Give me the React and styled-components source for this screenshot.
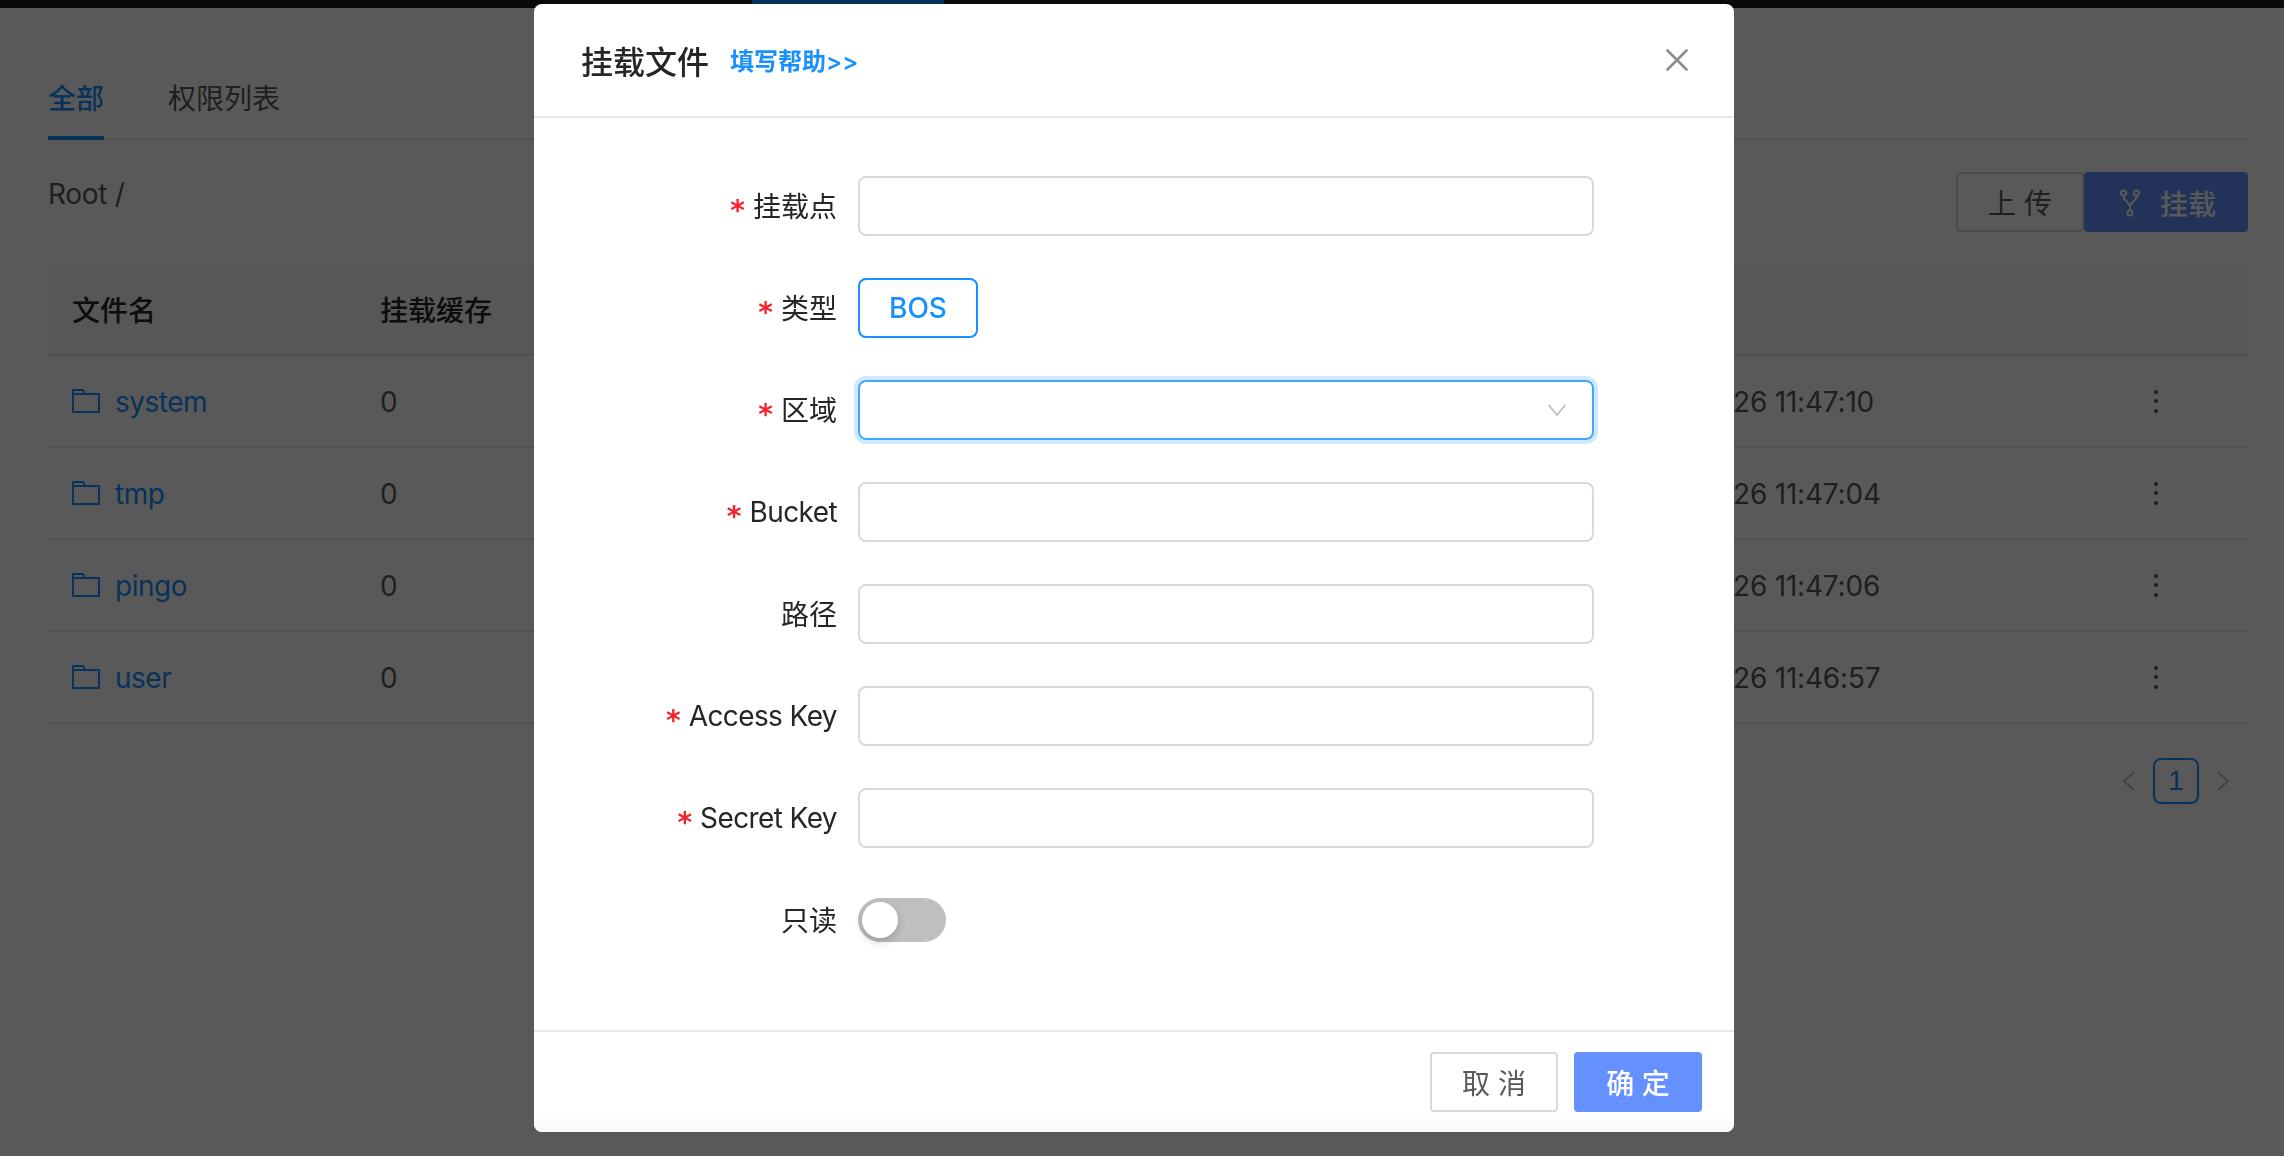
import React from "react";
import styled, { createGlobalStyle } from "styled-components";

const FONT = `Inter, "Noto Sans CJK SC", "Noto Sans", sans-serif`;
const BLUE = "#1890ff";

const files = [
  { name: "system", cache: "0", time: "26 11:47:10" },
  { name: "tmp", cache: "0", time: "26 11:47:04" },
  { name: "pingo", cache: "0", time: "26 11:47:06" },
  { name: "user", cache: "0", time: "26 11:46:57" },
];

const fields = [
  { label: "挂载点", required: true, kind: "input" },
  { label: "类型", required: true, kind: "type" },
  { label: "区域", required: true, kind: "select" },
  { label: "Bucket", required: true, kind: "input", latin: true },
  { label: "路径", kind: "input" },
  { label: "Access Key", required: true, kind: "input", latin: true },
  { label: "Secret Key", required: true, kind: "input", latin: true },
  { label: "只读", kind: "switch" },
];

const FolderIcon = () => (
  <svg width="28" height="24" viewBox="0 0 28 24" fill="none" stroke={BLUE} strokeWidth="2" strokeLinejoin="round">
    <path d="M1 23V1h10l2 4h14v18z" />
    <path d="M1 5h12" />
  </svg>
);

const ForkIcon = () => (
  <svg width="20" height="28" viewBox="0 0 20 28" fill="none" stroke="#fff" strokeWidth="2">
    <circle cx="3.5" cy="4" r="2.6" />
    <circle cx="16.5" cy="4" r="2.6" />
    <circle cx="10" cy="24" r="2.6" />
    <path d="M3.5 6.6V9L10 16.5 16.5 9V6.6M10 16.5v5" />
  </svg>
);

const CloseIcon = () => (
  <svg width="22" height="22" viewBox="0 0 22 22" fill="none" stroke="#8c8c8c" strokeWidth="2.6" strokeLinecap="round">
    <path d="M1.5 1.5l19 19M20.5 1.5l-19 19" />
  </svg>
);

const DownIcon = () => (
  <svg width="18" height="12" viewBox="0 0 18 12" fill="none" stroke="#bfbfbf" strokeWidth="1.8">
    <path d="M.7 1l8.3 10 8.3-10" />
  </svg>
);

const PageArrow = ({ left }) => (
  <svg width="13" height="20" viewBox="0 0 13 20" fill="none" stroke="#bfbfbf" strokeWidth="2.2">
    <path d={left ? "M12 1L2 10l10 9" : "M1 1l10 9-10 9"} />
  </svg>
);

const App = () => {
  const renderControl = (kind) => {
    if (kind === "type") return <TypeButton>BOS</TypeButton>;
    if (kind === "select")
      return (
        <Select>
          <DownIcon />
        </Select>
      );
    if (kind === "switch")
      return (
        <Switch>
          <Knob />
        </Switch>
      );
    return <Input type="text" />;
  };

  return (
    <>
      <GlobalStyle />
      <Page>
        <TopBar>
          <TopBarActive />
        </TopBar>
        <Content>
          <Tabs>
            <Tab $active>全部</Tab>
            <Tab>权限列表</Tab>
          </Tabs>
          <Toolbar>
            <Crumb>Root /</Crumb>
            <Actions>
              <UploadButton>上 传</UploadButton>
              <MountButton>
                <ForkIcon />
                挂载
              </MountButton>
            </Actions>
          </Toolbar>
          <Table>
            <HeadRow>
              <span>文件名</span>
              <span>挂载缓存</span>
            </HeadRow>
            {files.map((file) => (
              <Row key={file.name}>
                <NameCell>
                  <FolderIcon />
                  <CellText>{file.name}</CellText>
                </NameCell>
                <CellText>{file.cache}</CellText>
                <TimeCell>{file.time}</TimeCell>
                <Kebab>
                  <i />
                  <i />
                  <i />
                </Kebab>
              </Row>
            ))}
          </Table>
          <Pagination>
            <PageArrow left />
            <PageNumber>1</PageNumber>
            <PageArrow />
          </Pagination>
        </Content>
      </Page>

      <Overlay>
        <Modal>
          <ModalHeader>
            <ModalTitle>挂载文件</ModalTitle>
            <HelpLink>填写帮助&gt;&gt;</HelpLink>
            <CloseButton>
              <CloseIcon />
            </CloseButton>
          </ModalHeader>
          <ModalBody>
            {fields.map((field) => (
              <FormRow key={field.label}>
                <Label>
                  {field.required && <Star>*</Star>}
                  <LabelText $latin={field.latin}>{field.label}</LabelText>
                </Label>
                {renderControl(field.kind)}
              </FormRow>
            ))}
          </ModalBody>
          <ModalFooter>
            <CancelButton>取 消</CancelButton>
            <ConfirmButton>确 定</ConfirmButton>
          </ModalFooter>
        </Modal>
      </Overlay>
    </>
  );
};

const GlobalStyle = createGlobalStyle`
  * { box-sizing: border-box; }
  html, body {
    margin: 0;
    height: 100%;
    overflow: hidden;
    background: #fff;
    font-family: ${FONT};
  }
`;

const Page = styled.div`
  height: 1156px;
  background: #fff;
  color: #595959;
  font-size: 28px;
`;

const TopBar = styled.div`
  height: 8px;
  background: #1d1d1d;
  padding-left: 752px;
`;

const TopBarActive = styled.div`
  width: 192px;
  height: 8px;
  background: ${BLUE};
`;

const Content = styled.div`
  padding: 0 36px 0 48px;
`;

const Tabs = styled.div`
  display: flex;
  align-items: flex-end;
  gap: 64px;
  height: 132px;
  border-bottom: 2px solid #e8e8e8;
`;

const Tab = styled.div`
  line-height: 40px;
  padding-bottom: 17px;
  margin-bottom: -2px;
  border-bottom: 4px solid ${(p) => (p.$active ? BLUE : "transparent")};
  color: ${(p) => (p.$active ? BLUE : "#595959")};
  font-weight: ${(p) => (p.$active ? 500 : 400)};
`;

const Toolbar = styled.div`
  display: flex;
  justify-content: space-between;
  align-items: flex-start;
  padding: 32px 0;
`;

const Crumb = styled.div`
  line-height: 44px;
  letter-spacing: -0.3px;
`;

const Actions = styled.div`
  display: flex;
`;

const BaseButton = styled.button`
  height: 60px;
  border-radius: 4px;
  font-family: ${FONT};
  font-size: 28px;
  cursor: pointer;
`;

const UploadButton = styled(BaseButton)`
  width: 128px;
  padding: 0;
  background: #fff;
  border: 2px solid #d9d9d9;
  color: #595959;
`;

const MountButton = styled(BaseButton)`
  display: flex;
  align-items: center;
  gap: 20px;
  width: 164px;
  padding: 2px 0 0 36px;
  background: #6590ff;
  border: 0;
  color: #fff;
  font-weight: 500;
`;

const Table = styled.div`
  color: #595959;
`;

const Row = styled.div`
  display: grid;
  grid-template-columns: 308px 1354px 400px 1fr;
  align-items: center;
  height: 92px;
  padding-left: 24px;
  border-bottom: 2px solid #e8e8e8;
`;

const HeadRow = styled(Row)`
  background: #fafafa;
  color: #262626;
  font-weight: 500;
`;

const NameCell = styled.span`
  display: flex;
  align-items: center;
  gap: 15px;
  color: ${BLUE};
`;

const CellText = styled.span`
  padding-top: 2px;
  letter-spacing: -0.5px;
`;

const TimeCell = styled(CellText)`
  margin-left: -1px;
  letter-spacing: -0.2px;
`;

const Kebab = styled.span`
  display: flex;
  flex-direction: column;
  gap: 5.5px;
  padding-left: 20px;

  i {
    width: 4px;
    height: 4px;
    border-radius: 50%;
    background: #595959;
  }
`;

const Pagination = styled.div`
  display: flex;
  justify-content: flex-end;
  align-items: center;
  gap: 18px;
  margin-top: 34px;
  padding-right: 18px;
`;

const PageNumber = styled.div`
  width: 46px;
  height: 46px;
  border: 2px solid ${BLUE};
  border-radius: 8px;
  color: ${BLUE};
  font-family: "Liberation Sans", sans-serif;
  font-size: 28px;
  line-height: 42px;
  text-align: center;
`;

const Overlay = styled.div`
  position: fixed;
  inset: 0;
  display: flex;
  justify-content: center;
  align-items: flex-start;
  padding: 4px 16px 0 0;
  background: rgba(0, 0, 0, 0.65);
`;

const Modal = styled.div`
  display: flex;
  flex-direction: column;
  width: 1200px;
  height: 1128px;
  background: #fff;
  border-radius: 8px;
  overflow: hidden;
`;

const ModalHeader = styled.div`
  display: flex;
  align-items: center;
  height: 114px;
  padding: 0 46px 0 47px;
  border-bottom: 2px solid #e8e8e8;
`;

const ModalTitle = styled.div`
  color: #262626;
  font-size: 32px;
  font-weight: 500;
`;

const HelpLink = styled.a`
  margin-left: 21px;
  padding-bottom: 2px;
  color: ${BLUE};
  font-size: 24px;
  font-weight: 600;
`;

const CloseButton = styled.div`
  display: flex;
  margin-left: auto;
`;

const ModalBody = styled.div`
  flex: 1;
  padding-top: 58px;
`;

const FormRow = styled.div`
  display: grid;
  grid-template-columns: 303px 736px;
  column-gap: 21px;
  align-items: center;
  height: 60px;
  margin-bottom: 42px;
`;

const Label = styled.label`
  display: flex;
  justify-content: flex-end;
  align-items: center;
  gap: 8px;
  color: #262626;
  font-size: 28px;
`;

const LabelText = styled.span`
  padding-bottom: ${(p) => (p.$latin ? 0 : "2px")};
  letter-spacing: ${(p) => (p.$latin ? "-0.6px" : 0)};
`;

const Star = styled.span`
  padding-top: 9px;
  color: #f5222d;
  font-family: "DejaVu Sans", sans-serif;
  font-size: 28px;
  font-weight: 700;
  line-height: 1;
`;

const Input = styled.input`
  width: 736px;
  height: 60px;
  padding: 0 22px;
  background: #fff;
  border: 2px solid #d9d9d9;
  border-radius: 8px;
  outline: none;
`;

const TypeButton = styled.div`
  width: 120px;
  height: 60px;
  border: 2px solid ${BLUE};
  border-radius: 8px;
  color: ${BLUE};
  font-size: 28px;
  font-weight: 500;
  line-height: 56px;
  text-align: center;
`;

const Select = styled.div`
  display: flex;
  justify-content: flex-end;
  align-items: center;
  width: 736px;
  height: 60px;
  padding-right: 26px;
  border: 2px solid #40a9ff;
  border-radius: 8px;
  box-shadow: 0 0 0 4px rgba(24, 144, 255, 0.2);
`;

const Switch = styled.div`
  width: 88px;
  height: 44px;
  padding: 4px;
  background: #bfbfbf;
  border-radius: 22px;
`;

const Knob = styled.div`
  width: 36px;
  height: 36px;
  background: #fff;
  border-radius: 50%;
  box-shadow: 0 4px 8px rgba(0, 35, 11, 0.2);
`;

const ModalFooter = styled.div`
  display: flex;
  justify-content: flex-end;
  gap: 16px;
  height: 102px;
  padding: 20px 32px 20px 0;
  border-top: 2px solid #e8e8e8;
  background: linear-gradient(#fff 80%, #f9f9f9);
`;

const CancelButton = styled(BaseButton)`
  width: 128px;
  padding: 0;
  background: #fff;
  border: 2px solid #d9d9d9;
  color: #595959;
`;

const ConfirmButton = styled(BaseButton)`
  width: 128px;
  padding: 0;
  background: #6590ff;
  border: 0;
  color: #fff;
  font-weight: 500;
`;

export default App;
